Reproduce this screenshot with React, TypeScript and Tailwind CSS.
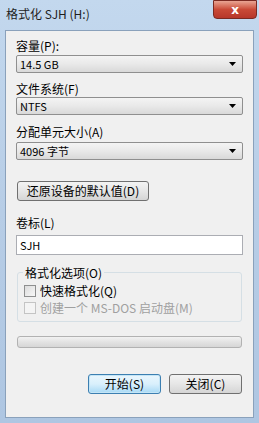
import { useState } from 'react'

const font = { fontFamily: '"Noto Sans CJK SC", "Liberation Sans", sans-serif' }

function Combo({ value }: { value: string }) {
  return (
    <div className="h-[18px] rounded-[2px] border border-[#8f8f8f] bg-gradient-to-b from-[#f4f4f4] via-[#e9e9e9] to-[#d9d9d9] flex items-center justify-between pl-[3px] pr-[6px]">
      <span className="text-[11px] leading-none text-black">{value}</span>
      <svg width="7" height="4" viewBox="0 0 7 4">
        <path d="M0 0h7L3.5 4z" fill="#000" />
      </svg>
    </div>
  )
}

function CheckBox({ label, disabled, checked, onClick }: { label: string; disabled?: boolean; checked?: boolean; onClick?: () => void }) {
  return (
    <div className="flex items-center gap-[4px] h-[17px]" onClick={disabled ? undefined : onClick}>
      <div className={`w-[12px] h-[12px] border ${disabled ? 'border-[#c4c4c4] bg-[#f4f4f4]' : 'border-[#8e8f8f] bg-gradient-to-br from-[#dcdcdc] to-[#f7f7f7]'} flex items-center justify-center`}>
        {checked && <span className="text-[9px] leading-none">✓</span>}
      </div>
      <span className={`text-[12px] leading-none ${disabled ? 'text-[#a0a0a0]' : 'text-black'}`}>{label}</span>
    </div>
  )
}

export default function App() {
  const [quick, setQuick] = useState(false)

  return (
    <div style={font} className="w-[259px] h-[423px] bg-gradient-to-b from-[#c3d8ee] via-[#b7cde6] to-[#aec6e2] flex flex-col px-[5px] pb-[5px] overflow-hidden">
      {/* title bar */}
      <div className="h-[30px] flex items-start justify-between shrink-0">
        <span className="mt-[5px] ml-[1px] text-[12px] text-[#1e1e1e]">格式化 SJH (H:)</span>
        <div className="w-[44px] h-[19px] -mr-[3px] rounded-b-[4px] border border-[#7a2a22] bg-gradient-to-b from-[#e8a493] via-[#c94a37] to-[#b7372a] flex items-center justify-center">
          <span className="text-white text-[12px] font-bold leading-none" style={{ fontFamily: '"DejaVu Sans", sans-serif' }}>x</span>
        </div>
      </div>

      {/* client */}
      <div className="flex-1 border border-[#8aa1bb] bg-[#f0f0f0] px-[10px] pt-[7px] flex flex-col">
        <span className="text-[12px] leading-[15px] text-black">容量(P):</span>
        <div className="mt-[2px]">
          <Combo value="14.5 GB" />
        </div>
        <span className="mt-[8px] text-[12px] leading-[15px] text-black">文件系统(F)</span>
        <div className="mt-[1px]">
          <Combo value="NTFS" />
        </div>
        <span className="mt-[9px] text-[12px] leading-[15px] text-black">分配单元大小(A)</span>
        <div className="mt-[3px]">
          <Combo value="4096 字节" />
        </div>

        <button className="mt-[21px] ml-[1px] self-start h-[20px] w-[132px] rounded-[3px] border border-[#707070] bg-gradient-to-b from-[#f3f3f3] via-[#e6e6e6] to-[#d5d5d5] text-[12px] leading-none text-black">
          还原设备的默认值(D)
        </button>

        <span className="mt-[14px] text-[12px] leading-[15px] text-black">卷标(L)</span>
        <div className="mt-[5px] h-[20px] border border-[#abadb3] bg-white flex items-center px-[3px]">
          <span className="text-[11px] leading-none text-black">SJH</span>
        </div>

        {/* group box */}
        <div className="relative mt-[17px] mx-[1px] h-[50px] border border-[#d5dfe5] rounded-[3px] pt-[9px] pl-[6px]">
          <span className="absolute -top-[8px] left-[5px] bg-[#f0f0f0] px-[2px] text-[12px] leading-[15px] text-black">格式化选项(O)</span>
          <CheckBox label="快速格式化(Q)" checked={quick} onClick={() => setQuick(!quick)} />
          <CheckBox label="创建一个 MS-DOS 启动盘(M)" disabled />
        </div>

        {/* progress */}
        <div className="mt-[14px] mx-[1px] h-[12px] rounded-[3px] border border-[#b2b2b2] bg-gradient-to-b from-[#f2f2f2] via-[#e3e3e3] to-[#d6d6d6]" />

        <div className="mt-[26px] flex justify-end gap-[8px] pr-[1px]">
          <button className="w-[73px] h-[20px] rounded-[3px] border border-[#3c7fb1] bg-gradient-to-b from-[#eaf6fd] via-[#d9f0fc] to-[#a7d9f5] text-[12px] leading-none text-black shadow-[inset_0_0_0_1px_#c4e5f6]">
            开始(S)
          </button>
          <button className="w-[73px] h-[20px] rounded-[3px] border border-[#707070] bg-gradient-to-b from-[#f3f3f3] via-[#e6e6e6] to-[#d5d5d5] text-[12px] leading-none text-black">
            关闭(C)
          </button>
        </div>
      </div>
    </div>
  )
}
